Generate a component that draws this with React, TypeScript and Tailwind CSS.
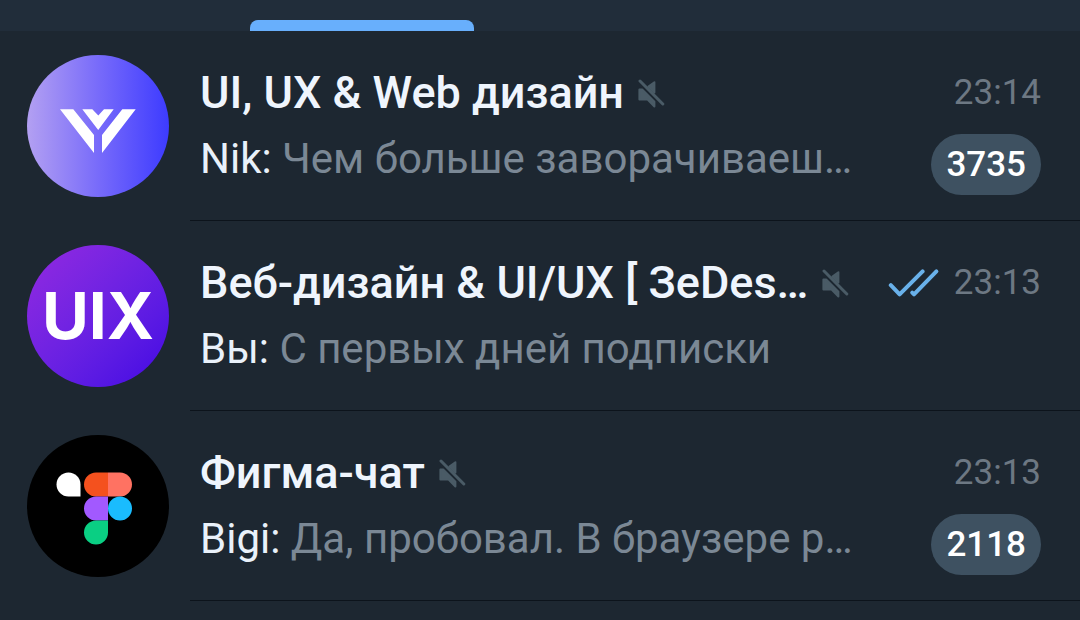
import type { ReactNode } from 'react';

interface Chat {
    id: string;
    title: string;
    sender: string;
    message: string;
    time: string;
    unread?: number;
    read?: boolean;
    avatar: ReactNode;
}

const WebDesignAvatar = () => (
    <svg viewBox="0 0 142 142" className="size-full" aria-hidden="true">
        <defs>
            <linearGradient id="web-bg" x1="0" y1="0" x2="1" y2="0">
                <stop offset="0" stopColor="#b3a0f2" />
                <stop offset="0.5" stopColor="#786bfa" />
                <stop offset="1" stopColor="#3d3bff" />
            </linearGradient>
        </defs>
        <rect width="142" height="142" fill="url(#web-bg)" />
        <path
            fill="#fff"
            d="M33 54.3H46.3L67 80V98ZM108.7 54.3H95.3L75 80V98ZM55.3 54.3H65.3L71.3 60.5L77 54.3H86.7L71.2 75Z"
        />
    </svg>
);

const UixAvatar = () => (
    <span className="flex size-full items-center justify-center bg-linear-to-br from-[#9428e0] to-[#4200e4] font-[Inter,sans-serif] text-[64px] leading-none font-bold text-white">
        UIX
    </span>
);

const FigmaAvatar = () => (
    <svg viewBox="0 0 142 142" className="size-full" aria-hidden="true">
        <rect width="142" height="142" fill="#000" />
        <path fill="#fff" d="M53.5 61.5H41.5A12 12 0 1 1 53.5 49.5Z" />
        <path fill="#f4511e" d="M81 37.5V61.5H69A12 12 0 0 1 69 37.5Z" />
        <path fill="#ff7262" d="M81 37.5H93A12 12 0 0 1 93 61.5H81Z" />
        <path fill="#a259ff" d="M81 61.5V85.5H69A12 12 0 0 1 69 61.5Z" />
        <circle fill="#1abcfe" cx="93" cy="73.5" r="12" />
        <path fill="#0acf83" d="M81 85.5V97.5A12 12 0 1 1 69 85.5Z" />
    </svg>
);

const MuteIcon = () => (
    <svg viewBox="0 0 27 31" className="h-[31px] w-[27px] shrink-0 text-[#4a5b66]" role="img" aria-label="Без звука">
        <g fill="currentColor" stroke="currentColor" strokeLinejoin="round">
            <path strokeWidth="2" d="M1.4 11.6H4.4L16.4 23.8V28.6L9.6 21.6H1.4Z" />
            <path strokeWidth="2" d="M10.4 8.6L16.4 4.2V14.6Z" />
        </g>
        <path d="M2 3L24.8 26" stroke="currentColor" strokeWidth="3" strokeLinecap="round" />
    </svg>
);

const ReadIcon = () => (
    <svg viewBox="0 0 52 30" className="h-[30px] w-[52px] shrink-0" role="img" aria-label="Прочитано">
        <g fill="none" stroke="#69b1ea" strokeWidth="4" strokeLinecap="round" strokeLinejoin="round">
            <path d="M2.8 17.2L11.6 26.4L34.6 3.4" />
            <path d="M24.2 24.6L26 26.4L48.4 3.4" />
        </g>
    </svg>
);

const chats: Chat[] = [
    {
        id: 'web',
        title: 'UI, UX & Web дизайн',
        sender: 'Nik:',
        message: 'Чем больше заворачиваеш…',
        time: '23:14',
        unread: 3735,
        avatar: <WebDesignAvatar />,
    },
    {
        id: 'uix',
        title: 'Веб-дизайн & UI/UX [ ЗеDes…',
        sender: 'Вы:',
        message: 'С первых дней подписки',
        time: '23:13',
        read: true,
        avatar: <UixAvatar />,
    },
    {
        id: 'figma',
        title: 'Фигма-чат',
        sender: 'Bigi:',
        message: 'Да, пробовал. В браузере р…',
        time: '23:13',
        unread: 2118,
        avatar: <FigmaAvatar />,
    },
];

const ChatRow = ({ chat }: { chat: Chat }) => (
    <li>
        <a href={`#${chat.id}`} className="flex gap-[21px] pl-[27px]">
            <div className="mt-6 size-[142px] shrink-0 overflow-hidden rounded-full">{chat.avatar}</div>

            <div className="flex min-w-0 flex-1 flex-col gap-[15px] border-b border-[#0c131b] pt-9 pr-[39px] pb-[25px] pl-[10px]">
                <div className="flex items-center">
                    <h2 className="truncate text-[45px] leading-[52px] font-medium text-[#eff5fd]">{chat.title}</h2>
                    <span className="ml-[14px]">
                        <MuteIcon />
                    </span>
                    <div className="ml-auto flex shrink-0 items-center gap-[14px]">
                        {chat.read && <ReadIcon />}
                        <time className="text-[35px] leading-[42px] text-[#6d7883]">{chat.time}</time>
                    </div>
                </div>

                <div className="flex items-start justify-between">
                    <p className="h-[61px] truncate text-[42px] leading-[50px] text-[#7b8895]">
                        <span className="text-[#e9f1fa]">{chat.sender}</span> {chat.message}
                    </p>
                    {chat.unread && (
                        <span className="shrink-0 rounded-full bg-[#3e5161] px-[15px] text-[35px] leading-[61px] font-medium text-white">
                            {chat.unread}
                        </span>
                    )}
                </div>
            </div>
        </a>
    </li>
);

export default function App() {
    return (
        <div className="min-h-screen bg-[#1d2731] font-[Roboto,sans-serif]">
            <header className="bg-[#212d3a] pt-5 pl-[250px]">
                <div className="h-[11px] w-56 rounded-t-lg bg-[#68affc]" />
            </header>
            <main>
                <ul>
                    {chats.map((chat) => (
                        <ChatRow key={chat.id} chat={chat} />
                    ))}
                </ul>
            </main>
        </div>
    );
}
